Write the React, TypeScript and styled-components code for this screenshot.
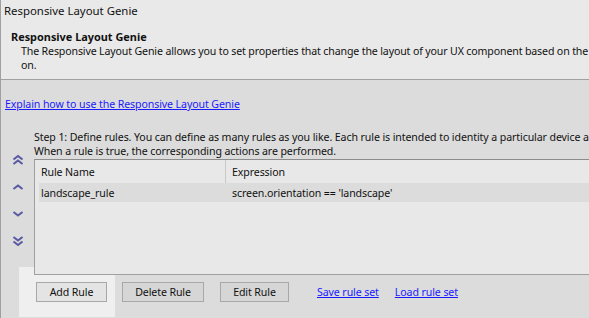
import styled, { createGlobalStyle } from "styled-components";

const GlobalStyle = createGlobalStyle`
  html, body {
    margin: 0;
    padding: 0;
    background: #dcdcdc;
  }
  body {
    font-family: "Segoe UI", "Noto Sans", "DejaVu Sans", sans-serif;
    font-size: 10.6px;
    letter-spacing: -0.1px;
    color: #111;
  }
`;

const Window = styled.div`
  width: 589px;
  height: 318px;
  overflow: hidden;
  border-left: 1px solid #a0a0a0;
  box-sizing: border-box;
  background: #dcdcdc;
  position: relative;
`;

const TopPanel = styled.div`
  height: 80px;
  background: #e9e9e9;
  border-bottom: 1px solid #a0a0a0;
  box-sizing: border-box;
  padding-top: 3px;
`;

const Title = styled.div`
  padding-left: 3px;
  font-size: 11.4px;
  letter-spacing: 0;
  line-height: 16px;
  white-space: nowrap;
`;

const Heading = styled.div`
  margin-top: 10px;
  padding-left: 10px;
  font-size: 10.9px;
  letter-spacing: 0;
  font-weight: bold;
  line-height: 15px;
  white-space: nowrap;
`;

const Description = styled.div`
  padding-left: 20px;
  letter-spacing: -0.14px;
  line-height: 14px;
  white-space: nowrap;
`;

const Body = styled.div`
  padding-top: 17px;
`;

const Link = styled.a`
  color: #1a1aff;
  text-decoration: underline;
  cursor: pointer;
  white-space: nowrap;
`;

const ExplainRow = styled.div`
  padding-left: 4px;
  line-height: 15px;
`;

const RulesArea = styled.div`
  display: flex;
  margin-top: 18px;
`;

const ArrowColumn = styled.div`
  width: 33px;
  display: flex;
  flex-direction: column;
  align-items: center;
  gap: 15px;
  padding-top: 24px;
  flex-shrink: 0;
`;

const ArrowButton = styled.div`
  width: 12px;
  height: 12px;
  display: flex;
  align-items: center;
  justify-content: center;
  color: #5a5aa4;
`;

const Content = styled.div`
  flex: 1;
  min-width: 0;
`;

const StepText = styled.div`
  line-height: 14px;
  white-space: nowrap;
`;

const Table = styled.div`
  position: relative;
  z-index: 1;
  margin-top: 1px;
  width: 620px;
  height: 116px;
  box-sizing: border-box;
  border: 1px solid #a0a0a0;
  border-top-color: #8c8c8c;
  background: #e8e8e8;
`;

const Row = styled.div<{ $header?: boolean }>`
  display: flex;
  height: ${(p) => (p.$header ? "23px" : "19px")};
  align-items: center;
  margin-left: ${(p) => (p.$header ? "0" : "4px")};
  background: ${(p) => (p.$header ? "transparent" : "#dcdcdc")};
`;

const Cell = styled.div<{ $header?: boolean; $first?: boolean }>`
  width: ${(p) => (p.$first ? (p.$header ? "191px" : "187px") : "auto")};
  height: 100%;
  display: flex;
  align-items: center;
  box-sizing: border-box;
  padding-left: ${(p) => (p.$header ? "6px" : p.$first ? "2px" : "6px")};
  border-right: ${(p) => (p.$header && p.$first ? "1px solid #c8c8c8" : "none")};
  white-space: nowrap;
`;

const ButtonRow = styled.div`
  display: flex;
  align-items: center;
  margin-top: 7px;
  padding-left: 2px;
`;

const FocusFrame = styled.span`
  display: flex;
  background: #efefef;
  margin: -15px 7px -15px -17px;
  padding: 15px 8px 15px 17px;
`;

const Button = styled.button<{ $width: number; $focused?: boolean }>`
  width: ${(p) => p.$width}px;
  height: 20px;
  padding: 0;
  font: inherit;
  letter-spacing: inherit;
  color: #111;
  background: ${(p) => (p.$focused ? "#e4e4e4" : "#d6d6d6")};
  border: 1px solid #a8a8a8;
  margin-right: ${(p) => (p.$focused ? "0" : "16px")};
`;

const LinkGroup = styled.div`
  display: flex;
  gap: 16px;
  margin-left: 12px;
`;

const Chevron = ({ up, double }: { up?: boolean; double?: boolean }) => (
  <svg width="12" height="12" viewBox="0 0 12 12" fill="none" stroke="currentColor" strokeWidth="2.1">
    {double ? (
      up ? (
        <>
          <path d="M1.5 5.5 L6 2 L10.5 5.5" />
          <path d="M1.5 10 L6 6.5 L10.5 10" />
        </>
      ) : (
        <>
          <path d="M1.5 2 L6 5.5 L10.5 2" />
          <path d="M1.5 6.5 L6 10 L10.5 6.5" />
        </>
      )
    ) : up ? (
      <path d="M1.5 8 L6 4.5 L10.5 8" />
    ) : (
      <path d="M1.5 4 L6 7.5 L10.5 4" />
    )}
  </svg>
);

export default function App() {
  return (
    <Window>
      <GlobalStyle />
      <TopPanel>
        <Title>Responsive Layout Genie</Title>
        <Heading>Responsive Layout Genie</Heading>
        <Description>
          The Responsive Layout Genie allows you to set properties that change the layout of your UX component based on the
        </Description>
        <Description>on.</Description>
      </TopPanel>
      <Body>
        <ExplainRow>
          <Link>Explain how to use the Responsive Layout Genie</Link>
        </ExplainRow>
        <RulesArea>
          <ArrowColumn>
            <ArrowButton><Chevron up double /></ArrowButton>
            <ArrowButton><Chevron up /></ArrowButton>
            <ArrowButton><Chevron /></ArrowButton>
            <ArrowButton><Chevron double /></ArrowButton>
          </ArrowColumn>
          <Content>
            <StepText>
              Step 1: Define rules. You can define as many rules as you like. Each rule is intended to identity a particular device and
            </StepText>
            <StepText>When a rule is true, the corresponding actions are performed.</StepText>
            <Table>
              <Row $header>
                <Cell $header $first>Rule Name</Cell>
                <Cell $header>Expression</Cell>
              </Row>
              <Row>
                <Cell $first>landscape_rule</Cell>
                <Cell>screen.orientation == 'landscape'</Cell>
              </Row>
            </Table>
            <ButtonRow>
              <FocusFrame>
                <Button $width={71} $focused>Add Rule</Button>
              </FocusFrame>
              <Button $width={82}>Delete Rule</Button>
              <Button $width={69}>Edit Rule</Button>
              <LinkGroup>
                <Link>Save rule set</Link>
                <Link>Load rule set</Link>
              </LinkGroup>
            </ButtonRow>
          </Content>
        </RulesArea>
      </Body>
    </Window>
  );
}
